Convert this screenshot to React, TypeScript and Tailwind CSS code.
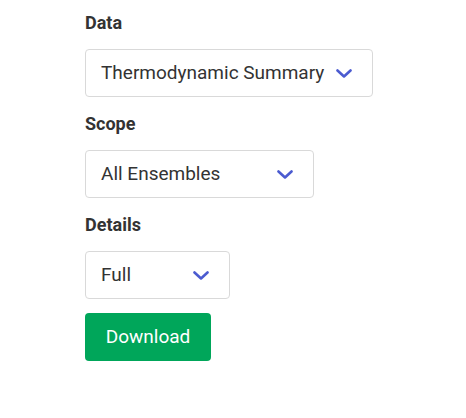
import { useState } from "react";

function Chevron() {
  return (
    <svg width="16" height="9" viewBox="0 0 16 9" className="shrink-0">
      <path d="M1.5 1.5 L8 7.5 L14.5 1.5" fill="none" stroke="#4b5bd0" strokeWidth="2.6" strokeLinecap="round" strokeLinejoin="round" />
    </svg>
  );
}

function SelectBox({ value, width }: { value: string; width: string }) {
  return (
    <div
      className={`flex h-[48px] ${width} items-center justify-between rounded border border-[#d9d9d9] bg-white pl-[15px] pr-[20px] pt-[1px] text-[19px] text-[#333333]`}
    >
      <span>{value}</span>
      <Chevron />
    </div>
  );
}

export default function App() {
  const [fields] = useState([
    { label: "Data", value: "Thermodynamic Summary", width: "w-[288px]" },
    { label: "Scope", value: "All Ensembles", width: "w-[229px]" },
    { label: "Details", value: "Full", width: "w-[145px]" },
  ]);

  return (
    <div className="min-h-screen w-full bg-white pl-[85px] pt-[11px]" style={{ fontFamily: "Roboto, 'Noto Sans', sans-serif" }}>
      <div className="flex flex-col">
        {fields.map((f) => (
          <div key={f.label} className="mb-[15px] flex flex-col">
            <p className="mb-[14px] text-[18px] font-bold leading-[24px] text-[#333333]">{f.label}</p>
            <SelectBox value={f.value} width={f.width} />
          </div>
        ))}
        <button className="-mt-[1px] h-[48px] w-[126px] rounded bg-[#00a65a] text-[19px] text-white">
          Download
        </button>
      </div>
    </div>
  );
}
